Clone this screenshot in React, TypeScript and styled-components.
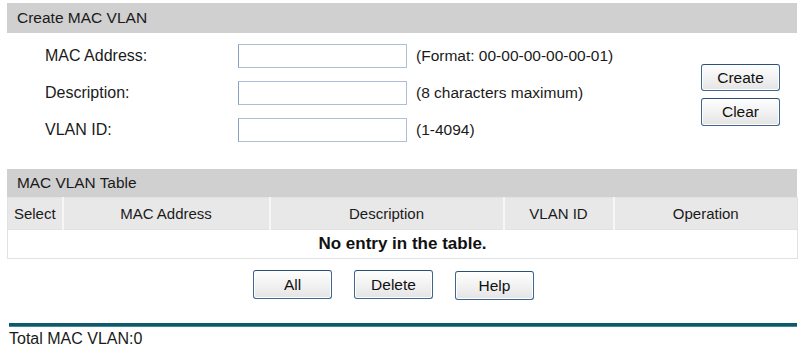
import React from 'react';
import styled, { createGlobalStyle } from 'styled-components';

const fields = [
  { label: 'MAC Address:', hint: '(Format: 00-00-00-00-00-01)' },
  { label: 'Description:', hint: '(8 characters maximum)' },
  { label: 'VLAN ID:', hint: '(1-4094)' },
];

const columns = [
  { title: 'Select', width: 55 },
  { title: 'MAC Address', width: 207 },
  { title: 'Description', width: 234 },
  { title: 'VLAN ID', width: 110 },
  { title: 'Operation', width: 184 },
];

export default function App() {
  return (
    <Page>
      <GlobalStyle />
      <SectionTitle>Create MAC VLAN</SectionTitle>

      <FormArea>
        <FormGrid>
          {fields.map((f) => (
            <React.Fragment key={f.label}>
              <Label>{f.label}</Label>
              <TextInput type="text" />
              <Hint>{f.hint}</Hint>
            </React.Fragment>
          ))}
        </FormGrid>
        <ButtonColumn>
          <Button>Create</Button>
          <Button $tall>Clear</Button>
        </ButtonColumn>
      </FormArea>

      <TableSection>
        <SectionTitle $compact>MAC VLAN Table</SectionTitle>
        <Table>
          <thead>
            <tr>
              {columns.map((c) => (
                <HeadCell key={c.title} style={{ width: c.width }}>
                  {c.title}
                </HeadCell>
              ))}
            </tr>
          </thead>
          <tbody>
            <tr>
              <EmptyCell colSpan={columns.length}>No entry in the table.</EmptyCell>
            </tr>
          </tbody>
        </Table>
      </TableSection>

      <ActionRow>
        <Button $wide>All</Button>
        <Button $wide>Delete</Button>
        <Button $wide $low>Help</Button>
      </ActionRow>

      <Divider />
      <Total>Total MAC VLAN:0</Total>
    </Page>
  );
}

const GlobalStyle = createGlobalStyle`
  body {
    margin: 0;
    background: #ffffff;
    font-family: "Liberation Sans", Arial, sans-serif;
    color: #1a1a1a;
  }
`;

const Page = styled.div`
  padding: 3px 7px 0 7px;
  width: 790px;
  font-size: 15px;
`;

const SectionTitle = styled.div<{ $compact?: boolean }>`
  height: ${(p) => (p.$compact ? 28 : 30)}px;
  line-height: ${(p) => (p.$compact ? 28 : 30)}px;
  background: #d0d0d0;
  padding-left: 10px;
  font-size: ${(p) => (p.$compact ? 15.4 : 15.5)}px;
  color: #1a1a1a;
`;

const FormArea = styled.div`
  display: flex;
  align-items: flex-start;
`;

const FormGrid = styled.div`
  display: grid;
  grid-template-columns: 193px 178px auto;
  grid-auto-rows: 24px;
  row-gap: 13px;
  align-items: center;
  padding: 11px 0 0 38px;
`;

const Label = styled.span`
  font-size: 16px;
`;

const TextInput = styled.input`
  box-sizing: border-box;
  width: 169px;
  height: 24px;
  margin: 0;
  padding: 0 3px;
  border: 1px solid #abbfd6;
  border-left-color: #8aa2c0;
  background: #ffffff;
  outline: none;
`;

const Hint = styled.span`
  font-size: 15.5px;
`;

const ButtonColumn = styled.div`
  margin-left: auto;
  margin-right: 17px;
  padding-top: 31px;
  display: flex;
  flex-direction: column;
  gap: 7px;
`;

const Button = styled.button<{ $tall?: boolean; $wide?: boolean; $low?: boolean }>`
  box-sizing: border-box;
  width: 79px;
  height: ${(p) => (p.$wide ? 29 : p.$tall ? 28 : 27)}px;
  margin-top: ${(p) => (p.$low ? 1 : 0)}px;
  padding: 0;
  border: 1px solid #3f6591;
  border-top-color: #2c4f7a;
  border-radius: 3px;
  background: linear-gradient(#fefefe, #f2f2f2 50%, #e4e4e4);
  box-shadow: inset 0 0 0 1px #ffffff;
  font-family: "Liberation Sans", Arial, sans-serif;
  font-size: 15.5px;
  color: #111111;
  cursor: pointer;
`;

const TableSection = styled.div`
  margin-top: 27px;
`;

const Table = styled.table`
  width: 790px;
  border-collapse: collapse;
  table-layout: fixed;
  border: 1px solid #e2e2e2;
`;

const HeadCell = styled.th`
  box-sizing: border-box;
  height: 32px;
  padding: 0;
  background: #e8e8e8;
  border-left: 2px solid #f6f6f6;
  font-weight: normal;
  font-size: 15px;
  color: #1a1a1a;
  text-align: center;

  &:first-child {
    border-left: none;
  }
`;

const EmptyCell = styled.td`
  height: 28px;
  padding: 0;
  text-align: center;
  font-weight: bold;
  font-size: 17px;
  color: #111111;
  background: #ffffff;
  border-top: 1px solid #e2e2e2;
`;

const ActionRow = styled.div`
  display: flex;
  align-items: flex-start;
  gap: 22px;
  padding: 11px 0 0 246px;
`;

const Divider = styled.div`
  margin: 23px 0 0 2px;
  height: 3px;
  background: #0d5a6b;
  border-bottom: 1px solid #4a8794;
`;

const Total = styled.div`
  margin: 3px 0 0 2px;
  font-size: 16px;
  line-height: 18px;
  color: #1a1a1a;
`;
